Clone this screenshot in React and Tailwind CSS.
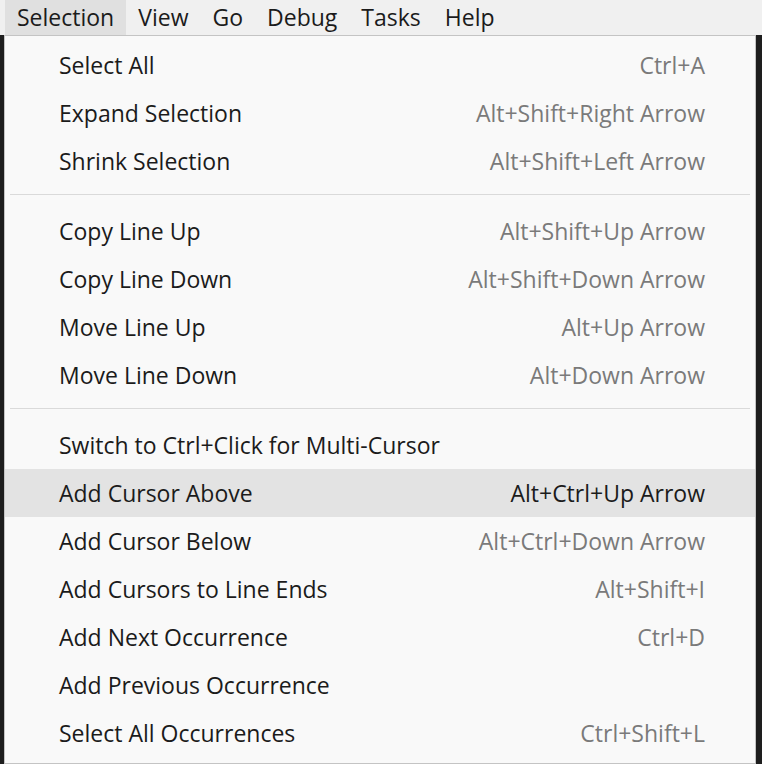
const menus = ["Selection", "View", "Go", "Debug", "Tasks", "Help"];

const groups = [
  [
    ["Select All", "Ctrl+A"],
    ["Expand Selection", "Alt+Shift+Right Arrow"],
    ["Shrink Selection", "Alt+Shift+Left Arrow"],
  ],
  [
    ["Copy Line Up", "Alt+Shift+Up Arrow"],
    ["Copy Line Down", "Alt+Shift+Down Arrow"],
    ["Move Line Up", "Alt+Up Arrow"],
    ["Move Line Down", "Alt+Down Arrow"],
  ],
  [
    ["Switch to Ctrl+Click for Multi-Cursor", ""],
    ["Add Cursor Above", "Alt+Ctrl+Up Arrow", true],
    ["Add Cursor Below", "Alt+Ctrl+Down Arrow"],
    ["Add Cursors to Line Ends", "Alt+Shift+I"],
    ["Add Next Occurrence", "Ctrl+D"],
    ["Add Previous Occurrence", ""],
    ["Select All Occurrences", "Ctrl+Shift+L"],
  ],
];

function Row({ label, shortcut, active }) {
  return (
    <div
      className={[
        "flex h-[48px] items-center justify-between pl-[54px] pr-[50px]",
        active ? "bg-[#e3e3e3]" : "",
      ].join(" ")}
    >
      <span className="text-[#1b1b1b]">{label}</span>
      <span className={active ? "text-[#1b1b1b]" : "text-[#7a7a7a]"}>{shortcut}</span>
    </div>
  );
}

export default function App() {
  return (
    <div
      className="flex h-[764px] w-[762px] flex-col overflow-hidden bg-[#1e1e1e] text-[23px]"
      style={{ fontFamily: '"Open Sans", "Noto Sans", sans-serif' }}
    >
      <nav className="flex h-[35px] shrink-0 items-center bg-[#f0f0f0] pl-[5px] text-[#1b1b1b]">
        {menus.map((m, i) => (
          <div
            key={m}
            className={[
              "flex h-full items-center px-[12px]",
              i === 0 ? "bg-[#e0e0e0]" : "",
            ].join(" ")}
          >
            {m}
          </div>
        ))}
      </nav>
      <div className="ml-[4px] w-[752px] flex-1 border border-[#c4c4c4] bg-[#f9f9f9] pt-[5px]">
        {groups.map((g, gi) => (
          <div key={gi}>
            {gi > 0 ? (
              <div className="mx-[5px] mb-[12px] mt-[9px] h-px bg-[#dadada]" />
            ) : null}
            {g.map(([label, shortcut, active]) => (
              <Row key={label} label={label} shortcut={shortcut} active={active} />
            ))}
          </div>
        ))}
      </div>
    </div>
  );
}
